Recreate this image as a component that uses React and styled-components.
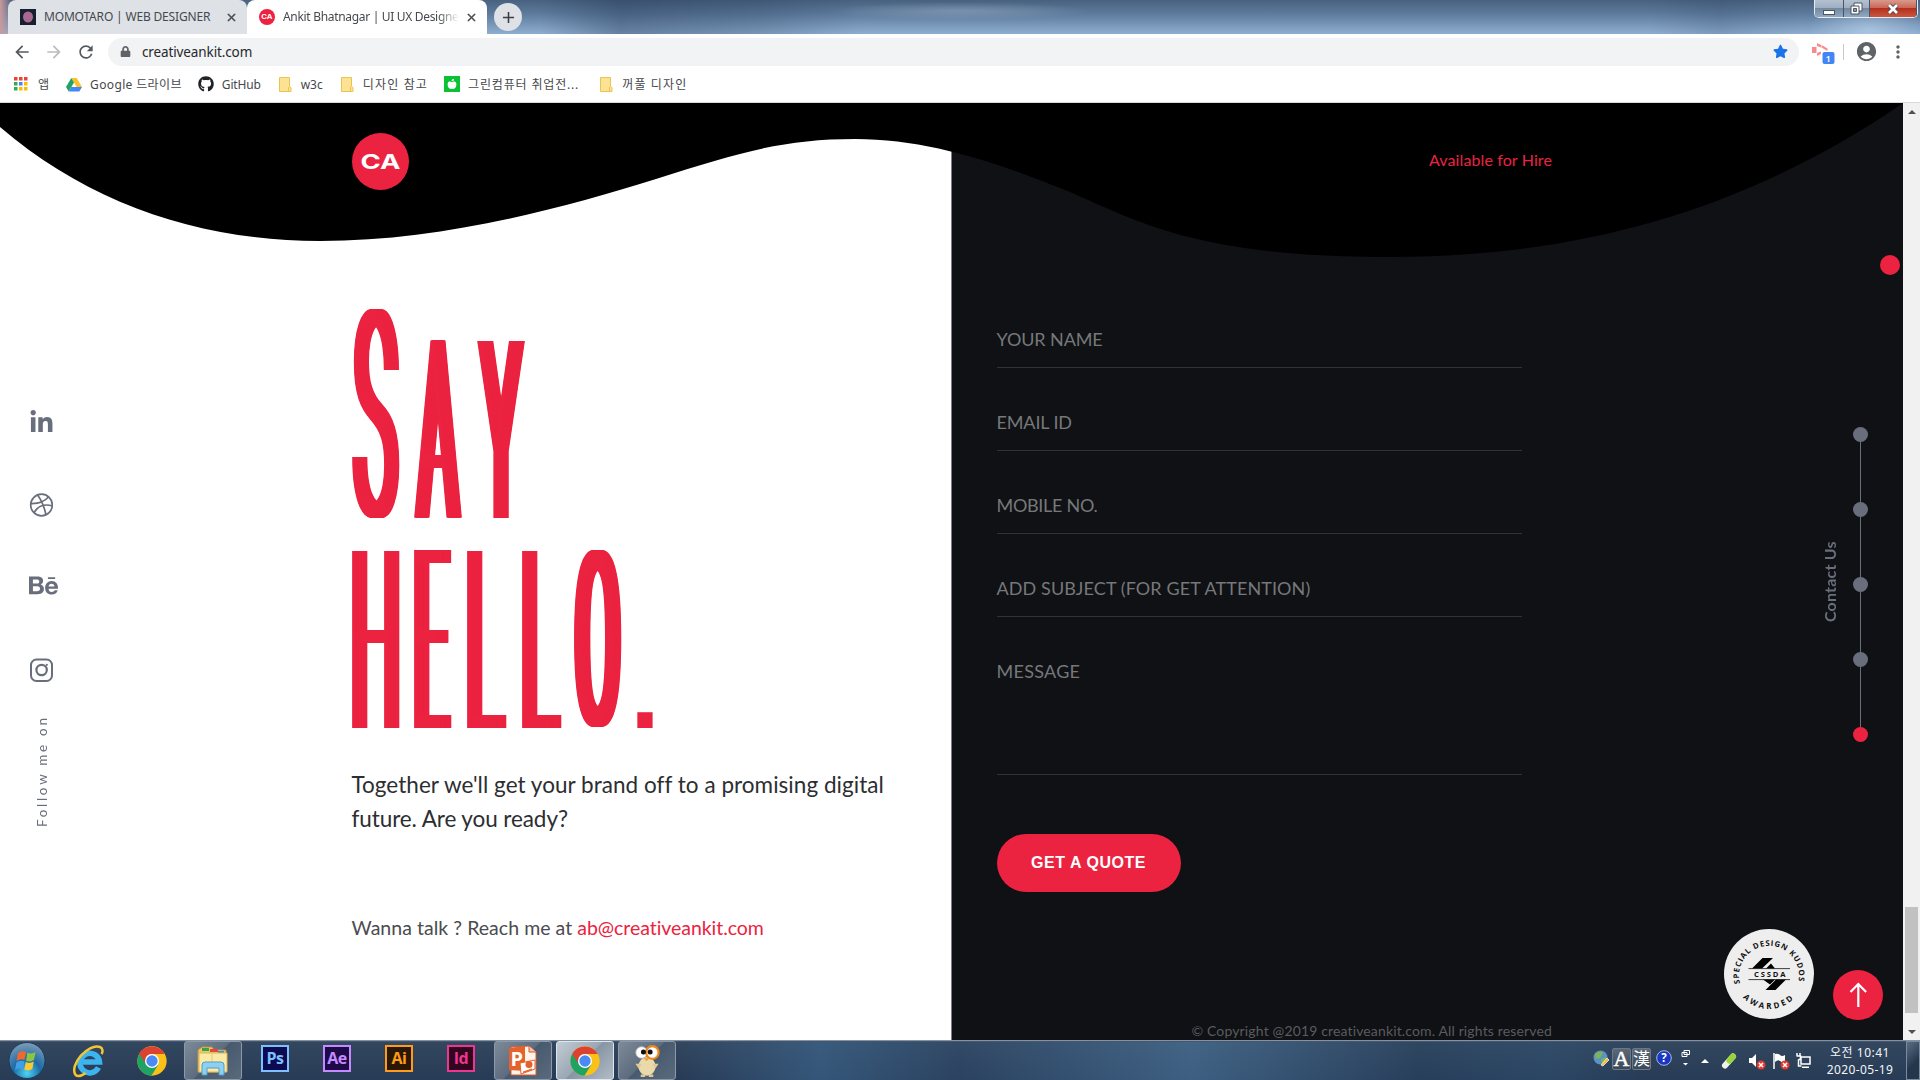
import React, { useLayoutEffect, useMemo, useRef, useState } from "react";
import styled, { createGlobalStyle, css } from "styled-components";
import { FaLinkedinIn, FaBehance, FaGithub, FaStar, FaLock, FaAppleAlt } from "react-icons/fa";
import { MdArrowBack, MdArrowForward, MdRefresh, MdAccountCircle, MdMoreVert, MdClose, MdAdd } from "react-icons/md";

const RED = "#eb2340";
const DARK = "#0f1114";
const SLATE = "#686e7c";

const Global = createGlobalStyle`
  * { box-sizing: border-box; }
  body { margin: 0; overflow: hidden; background: #fff; }
  h1, p { margin: 0; font-weight: inherit; }
`;

/* ---------- text fitted to a measured width ---------- */

const FitSpan = styled.span`
  display: inline-block;
  white-space: pre;
`;

function Fit({ width, children }) {
  const ref = useRef(null);
  const [spacing, setSpacing] = useState(0);
  useLayoutEffect(() => {
    const natural = ref.current.offsetWidth;
    setSpacing((width - natural) / children.length);
  }, [width, children]);
  return <FitSpan ref={ref} style={{ letterSpacing: `${spacing}px` }}>{children}</FitSpan>;
}

/* ---------- shell ---------- */

const Screen = styled.div`
  width: 1920px;
  height: 1080px;
  display: flex;
  flex-direction: column;
  overflow: hidden;
  font-family: "Noto Sans", "Noto Sans CJK KR", sans-serif;
`;

const TabStrip = styled.div`
  height: 34px;
  flex: none;
  display: flex;
  padding-left: 8px;
  background:
    radial-gradient(ellipse 60px 26px at 1868px 30px, rgba(190, 215, 240, 0.6), transparent),
    radial-gradient(ellipse 130px 9px at 960px 11px, rgba(190, 205, 220, 0.32), transparent),
    linear-gradient(90deg, #c99a9c 0, rgba(200, 154, 156, 0) 12px),
    linear-gradient(90deg, transparent 540px, rgba(30, 50, 80, 0.35) 620px, rgba(30, 50, 80, 0.2) 760px, transparent 860px, transparent 1650px, rgba(30, 50, 80, 0.15) 1720px, transparent 1800px),
    linear-gradient(#48617f 0, #5d7a9c 40%, #8eaed0 100%);
`;

const Tab = styled.div`
  width: ${(p) => p.$w}px;
  height: 34px;
  display: flex;
  align-items: center;
  padding: 0 9px 0 ${(p) => p.$pad}px;
  border-radius: 8px 8px 0 0;
  background: ${(p) => (p.$active ? "#fff" : "#dee1e6")};
  color: #45494d;
  font-size: 12px;
  svg { flex: none; }
  svg:last-child path:last-child { stroke: currentColor; stroke-width: 1; }
`;

const TabTitle = styled.div`
  flex: 1;
  min-width: 0;
  overflow: hidden;
  margin: 0 6px 0 8px;
  padding-bottom: 1px;
  white-space: nowrap;
  ${(p) => p.$fade && css`mask-image: linear-gradient(90deg, #000 88%, transparent);`}
`;

const NewTab = styled.div`
  width: 28px;
  height: 28px;
  margin: 3px 0 0 7px;
  border-radius: 50%;
  background: #dee1e6;
  color: #3c4043;
  display: flex;
  align-items: center;
  justify-content: center;
`;

const WindowButtons = styled.div`
  display: flex;
  width: 104px;
  height: 18px;
  margin: 0 2px 0 auto;
  border: 1px solid #e4ebf3;
  border-top: 0;
  border-radius: 0 0 5px 5px;
  box-shadow: inset 0 0 0 1px #3c4a5c;
  overflow: hidden;
`;

const WindowButton = styled.div`
  flex: ${(p) => p.$w} 0 0;
  display: flex;
  align-items: center;
  justify-content: center;
  border-right: 1px solid #46566a;
  background: ${(p) => (p.$close
    ? "linear-gradient(#d99a8d 0, #c9695a 45%, #b5301c 50%, #c9583f 100%)"
    : "linear-gradient(#b4c1d0 0, #9fafc2 45%, #7488a0 50%, #93a9c2 100%)")};
`;

const Toolbar = styled.div`
  height: 35px;
  flex: none;
  display: flex;
  align-items: center;
  background: #fff;
  color: #5f6368;
  padding-left: 12px;
`;

const NavIcon = styled.div`
  width: 20px;
  height: 20px;
  margin-right: 12px;
  font-size: 20px;
  line-height: 0;
  color: ${(p) => (p.$dim ? "#babcbe" : "#55595e")};
`;

const Omnibox = styled.div`
  width: 1691px;
  height: 28px;
  border-radius: 14px;
  background: #f1f3f4;
  display: flex;
  align-items: center;
  padding: 0 11px 0 12px;
  font-size: 13.5px;
  color: #26282b;
`;

const Url = styled.div`
  flex: 1;
  margin-left: 11px;
`;

const Extension = styled.div`
  width: 24px;
  height: 26px;
  margin: 4px 0 0 13px;
`;

const Separator = styled.div`
  width: 1px;
  height: 16px;
  background: #c6c8cb;
  margin: 0 11px 0 7px;
`;

const MenuDots = styled.div`
  margin-left: 10px;
  line-height: 0;
`;

const Bookmarks = styled.div`
  height: 34px;
  flex: none;
  display: flex;
  align-items: center;
  padding: 0 0 3px 14px;
  border-bottom: 1px solid #d8d9db;
  background: #fff;
  font-size: 12px;
  color: #45484c;
`;

const Bookmark = styled.div`
  display: flex;
  align-items: center;
  gap: ${(p) => p.$gap || 8}px;
  margin-right: ${(p) => p.$after || 18}px;
  svg { flex: none; }
`;

/* ---------- page ---------- */

const Viewport = styled.div`
  height: 937px;
  flex: none;
  display: flex;
`;

const Page = styled.main`
  position: relative;
  width: 1903px;
  display: grid;
  grid-template-columns: 952px 951px;
  overflow: hidden;
  font-family: Lato, "Open Sans", sans-serif;
`;

const Intro = styled.section`
  background: #fff;
  border-right: 1px solid #7b8088;
  padding: 206px 0 0 351.5px;
  color: #2c2e32;
`;

const Headline = styled.h1`
  display: flex;
  flex-direction: column;
  gap: 32px;
  height: 419px;
  color: ${RED};
  line-height: 250px;
`;

const HeadlineRow = styled.span`
  display: flex;
  align-items: flex-end;
`;

const Cell = styled.span`
  display: block;
  flex: none;
  width: ${(p) => p.$w}px;
  height: ${(p) => p.$h}px;
  margin-right: ${(p) => p.$after || 0}px;
`;

const Letter = styled.span`
  display: block;
  width: max-content;
  transform-origin: 0 0;
  font: ${(p) => p.$font};
  line-height: 250px;
`;

const FACES = {
  straight: { font: "300 250px Roboto, sans-serif", stem: 17 },
  round: { font: '400 250px "DejaVu Sans Mono", monospace', stem: 24 },
  dot: { font: '700 250px "Liberation Sans", sans-serif', stem: 0 },
};

function Glyph({ ch, w, h, after, face = "straight" }) {
  const { font, stem } = FACES[face];
  const style = useMemo(() => {
    const ctx = document.createElement("canvas").getContext("2d");
    ctx.font = font;
    const m = ctx.measureText(ch);
    const inkW = m.actualBoundingBoxRight + m.actualBoundingBoxLeft;
    const inkH = m.actualBoundingBoxAscent + m.actualBoundingBoxDescent;
    const sx = stem ? (w - 15.7) / (inkW - stem) : w / inkW;
    const sy = h / inkH;
    const grow = stem ? Math.max(0, 15.7 / sx - stem) : 0;
    const baseline = (250 - m.fontBoundingBoxAscent - m.fontBoundingBoxDescent) / 2 + m.fontBoundingBoxAscent;
    const steps = Math.ceil(grow / 2);
    const shadows = [];
    for (let i = 1; i <= steps; i += 1) shadows.push(`${((grow * i) / steps).toFixed(2)}px 0 0 ${RED}`);
    return {
      transform: `translate(${m.actualBoundingBoxLeft * sx}px, ${-(baseline - m.actualBoundingBoxAscent) * sy}px) scale(${sx}, ${sy})`,
      textShadow: shadows.join(", ") || "none",
    };
  }, [ch, w, h, font, stem]);
  return <Cell $w={w} $h={h} $after={after}><Letter $font={font} style={style}>{ch}</Letter></Cell>;
}

const Lead = styled.p`
  margin-top: 40px;
  font-size: 22.5px;
  line-height: 34px;
`;

const Contact = styled.p`
  margin-top: 78px;
  font-size: 19.5px;
  line-height: 28px;
  color: #4a4c50;
`;

const Mail = styled.span`
  color: ${RED};
`;

const Quote = styled.section`
  background: ${DARK};
  padding: 214px 0 0 44.5px;
  display: flex;
  flex-direction: column;
  align-items: flex-start;
`;

const Field = styled.div`
  width: 525px;
  height: ${(p) => p.$h}px;
  padding-top: ${(p) => p.$pt}px;
  border-bottom: 1px solid #303236;
  color: #76787a;
  font-size: 18px;
  line-height: 28px;
`;

const Submit = styled.div`
  width: 184px;
  height: 58px;
  margin-top: 59px;
  border-radius: 29px;
  background: ${RED};
  color: #fff;
  font: bold 16px/58px "Liberation Sans", sans-serif;
  text-align: center;
`;

const Copyright = styled.div`
  margin: 122px 0 0 195px;
  width: 362px;
  font-size: 14px;
  line-height: 34px;
  white-space: nowrap;
  color: #5a5c60;
`;

const Wave = styled.svg`
  position: absolute;
  inset: 0 auto auto 0;
`;

const Header = styled.header`
  position: absolute;
  top: 30px;
  left: 352px;
  width: 1200px;
  display: flex;
  justify-content: space-between;
  align-items: center;
  color: ${RED};
  font-size: 16px;
`;

const Hire = styled.div`
  padding-bottom: 4px;
`;

const Logo = styled.div`
  width: 57px;
  height: 57px;
  line-height: 0;
`;

const Social = styled.nav`
  position: absolute;
  top: 307px;
  left: 29px;
  display: flex;
  flex-direction: column;
  color: ${SLATE};
`;

const SocialLink = styled.div`
  height: ${(p) => p.$h || 83}px;
  line-height: 0;
`;

const Vertical = styled.div`
  writing-mode: vertical-rl;
  transform: rotate(180deg);
  white-space: nowrap;
  font-size: ${(p) => p.$size}px;
  font-weight: ${(p) => p.$weight || 400};
  line-height: 20px;
  width: 20px;
  height: ${(p) => p.$h}px;
  margin-bottom: ${(p) => p.$lift || 0}px;
  letter-spacing: ${(p) => p.$ls}px;
  color: ${SLATE};
`;

const Follow = styled.div`
  margin: -28px 0 0 3px;
`;

const Progress = styled.aside`
  position: absolute;
  top: 324px;
  left: 1820px;
  display: flex;
  align-items: center;
  gap: 13px;
  height: 315px;
`;

const Track = styled.div`
  width: 15px;
  height: 315px;
  display: flex;
  flex-direction: column;
  align-items: center;
  justify-content: space-between;
  background: linear-gradient(${SLATE}, ${SLATE}) center / 1px 300px no-repeat;
`;

const Dot = styled.div`
  width: 15px;
  height: 15px;
  border-radius: 50%;
  background: ${(p) => (p.$on ? RED : SLATE)};
`;

const Cursor = styled.div`
  position: absolute;
  top: 152px;
  left: 1880px;
  width: 20px;
  height: 20px;
  border-radius: 50%;
  background: ${RED};
`;

const Corner = styled.div`
  position: absolute;
  top: 826px;
  left: 1724px;
  display: flex;
  align-items: flex-end;
  gap: 19px;
`;

const ToTop = styled.div`
  width: 50px;
  height: 50px;
  margin-bottom: -1px;
  border-radius: 50%;
  background: ${RED};
  line-height: 0;
`;

const Scrollbar = styled.div`
  width: 17px;
  background: #f1f1f1;
  display: flex;
  flex-direction: column;
  align-items: center;
  padding: 7px 0 6px;
`;

const Thumb = styled.div`
  width: 13px;
  height: 106px;
  margin: 793px 0 auto;
  background: #c1c1c1;
`;

const Arrow = styled.div`
  border: 4px solid transparent;
  ${(p) => (p.$up ? "border-top: 0; border-bottom-color" : "border-bottom: 0; border-top-color")}: ${(p) => p.$c || "#505050"};
`;

/* ---------- taskbar ---------- */

const Taskbar = styled.footer`
  height: 40px;
  flex: none;
  display: flex;
  align-items: center;
  border-top: 1px solid #8492a5;
  box-shadow: inset 0 1px 0 #45566d;
  background:
    linear-gradient(90deg, transparent 680px, rgba(64, 108, 150, 0.55) 820px, rgba(50, 80, 115, 0.35) 960px, rgba(84, 130, 172, 0.5) 1190px, rgba(40, 70, 100, 0.3) 1420px, rgba(50, 90, 125, 0.35) 1550px, transparent 1640px),
    linear-gradient(#33475f, #273b56);
`;

const TaskButton = styled.div`
  width: ${(p) => p.$w || 58}px;
  height: 39px;
  margin-right: 4px;
  display: flex;
  align-items: center;
  justify-content: center;
  border-radius: 3px;
  ${(p) => p.$open && css`
    border: 1px solid ${p.$open === 2 ? "#dfe6ec" : "#8c99a8"};
    background: ${p.$open === 2
      ? "linear-gradient(135deg, #c3ccd5 0, #9aa7b4 48%, #8795a4 50%, #b2bcc6 100%)"
      : "linear-gradient(135deg, #7d8a99 0, #5d6c7e 48%, #485a6e 50%, #5a6a7d 100%)"};
  `}
`;

const AdobeTile = styled.div`
  width: 28px;
  height: 27px;
  margin-bottom: 4px;
  border: 2px solid ${(p) => p.$c};
  background: ${(p) => p.$bg};
  color: ${(p) => p.$c};
  font: 700 16px/22px "Open Sans", sans-serif;
  text-align: center;
  letter-spacing: -0.5px;
`;

const Tray = styled.div`
  margin-left: auto;
  display: flex;
  align-items: center;
  height: 39px;
`;

const Ime = styled.div`
  width: 19px;
  height: 22px;
  margin: -3px 1px 0 0;
  border: 1px solid #6d7885;
  border-radius: 2px;
  background: linear-gradient(#5a6878, #3a4959);
  color: #fff;
  font: ${(p) => (p.$latin ? '22px/20px "Liberation Serif", serif' : '17px/18px "Noto Sans CJK KR", sans-serif')};
  -webkit-text-stroke: ${(p) => (p.$latin ? 0.5 : 0)}px #fff;
  display: flex;
  justify-content: center;
`;

const TrayIcon = styled.div`
  width: ${(p) => p.$w || 24}px;
  display: flex;
  justify-content: center;
  margin-top: ${(p) => p.$t || 0}px;
`;

const Clock = styled.div`
  width: 92px;
  text-align: center;
  color: #f2f5f8;
  font-size: 12px;
  line-height: 17px;
`;

const ShowDesktop = styled.div`
  width: 14px;
  height: 39px;
  border: 1px solid #7c8b9c;
  background: linear-gradient(135deg, #5c6e82, #24364c 60%);
`;

/* ---------- drawings ---------- */

const Chrome = ({ size = 32 }) => (
  <svg width={size} height={size} viewBox="0 0 48 48">
    <circle cx="24" cy="24" r="22" fill="#fbc116" />
    <path d="M24 24L4.900 13A22 22 0 0 0 23 46L33.500 29.500Z" fill="#1ea362" />
    <path d="M4.900 13A22 22 0 0 1 43.100 13.500H24A10.500 10.500 0 0 0 14.500 28.500Z" fill="#dd4132" />
    <circle cx="24" cy="24" r="10.500" fill="#fff" />
    <circle cx="24" cy="24" r="8.500" fill="#4a8af4" />
  </svg>
);

const Folder = () => (
  <svg width="13" height="15" viewBox="0 0 13 15">
    <path d="M.5.5h10v9l1.500 1v4H.5z" fill="#fde293" stroke="#e8c451" />
    <path d="M9.500 10v4.500" stroke="#e8c451" />
  </svg>
);

const Apps = () => (
  <svg width="14" height="14" viewBox="0 0 14 14">
    {["#ea4335", "#ea4335", "#ea4335", "#34a853", "#4285f4", "#fbbc05", "#34a853", "#fbbc05", "#fbbc05"].map((c, i) => (
      <rect key={i} x={(i % 3) * 5} y={Math.floor(i / 3) * 5} width="3.500" height="3.500" fill={c} />
    ))}
  </svg>
);

const Drive = () => (
  <svg width="16" height="15" viewBox="0 0 16 15">
    <path d="M5.300 1h5.400L16 10h-5.400z" fill="#fbc02d" />
    <path d="M5.300 1L0 10l2.700 4.500L8 5.600z" fill="#1fa463" />
    <path d="M5.300 10H16l-2.700 4.500H2.700z" fill="#4587f4" />
  </svg>
);

const LogoText = ({ size }) => (
  <svg width={size} height={size} viewBox="0 0 57 57">
    <circle cx="28.500" cy="28.500" r="28.500" fill={RED} />
    <text x="8.500" y="35.500" textLength="40" lengthAdjust="spacingAndGlyphs" fill="#fff" fontFamily="Inter, sans-serif" fontWeight="700" fontSize="20.500">CA</text>
  </svg>
);

const Dribbble = () => (
  <svg width="24" height="24" viewBox="0 0 24 24" fill="none" stroke="currentColor" strokeWidth="1.700">
    <circle cx="12.500" cy="12" r="10.800" />
    <path d="M8.500 2c3.500 4.500 6.500 10.500 8.500 20M1.800 10.500c7.500.3 13-1.200 17.700-6.500M5 19.800c3.500-6.300 9.500-9.300 18.200-7" />
  </svg>
);

const Instagram = () => (
  <svg width="24" height="24" viewBox="0 0 24 24" fill="none" stroke="currentColor" strokeWidth="2">
    <rect x="2" y="1.500" width="21" height="21.500" rx="5.500" />
    <circle cx="12.600" cy="12" r="5.200" strokeWidth="2.200" />
    <circle cx="17.800" cy="6.800" r="1.100" fill="currentColor" stroke="none" />
  </svg>
);

const Award = () => (
  <svg width="90" height="90" viewBox="0 0 90 90" fontFamily="Open Sans, sans-serif" fontWeight="700">
    <defs>
      <path id="arcTop" d="M16 54.500A30 30 0 1 1 74 54.500" />
      <path id="arcBottom" d="M14 61.500A35.300 35.300 0 0 0 76 61.500" />
    </defs>
    <circle cx="45" cy="45" r="45" fill="#eee" />
    <text fontSize="7.800" fill="#111"><textPath href="#arcTop" textLength="107">SPECIAL DESIGN KUDOS</textPath></text>
    <text fontSize="8" fill="#111"><textPath href="#arcBottom" startOffset="8.500" textLength="56">AWARDED</textPath></text>
    <path d="M28 39.500L38.500 29H49L38 39.500zM42 39.500l5-5 4 5zM39 50.500h12l-5 5zM41.500 61L52 50.500h10L51.500 61z" fill="#000" />
    <path d="M24.500 39.600h41.500M24.500 50.600h41.500" stroke="#111" strokeWidth=".8" />
    <text x="30" y="47.900" fontSize="7.600" textLength="31.500" fill="#111">CSSDA</text>
  </svg>
);

const Orb = () => (
  <svg width="40" height="40" viewBox="0 0 40 40">
    <defs>
      <radialGradient id="orb" cx=".5" cy=".85" r=".85">
        <stop offset="0" stopColor="#4fd4f5" /><stop offset=".45" stopColor="#1d6aa5" /><stop offset="1" stopColor="#7f9db8" />
      </radialGradient>
    </defs>
    <circle cx="20" cy="19.500" r="18" fill="url(#orb)" stroke="#1b3a5a" />
    <path d="M11 12q4-3 8-1l-1.500 8q-4-2-8 1z" fill="#f0682c" />
    <path d="M20.500 11.500q4 2 8-.5l-1.500 8q-4 2.500-8 .5z" fill="#8cc63e" />
    <path d="M9.300 21.500q4-3 8-1L16 28q-4-2-8 1z" fill="#3fa0e8" />
    <path d="M18.800 21q4 2 8-.5L25.300 28q-4 2.500-8 .5z" fill="#fdc92e" />
  </svg>
);

const Explorer = () => (
  <svg width="34" height="32" viewBox="0 0 34 32">
    <path d="M2 5l4-3h10l2 3h12v22H2z" fill="#e9c869" stroke="#b8923a" />
    <path d="M6 3h7v3H6z" fill="#35a34a" /><path d="M14 4h8v3h-8z" fill="#e04a38" /><path d="M22 6h6v3h-6z" fill="#3f8ee0" />
    <path d="M3 8h28v19H3z" fill="#fbe9a6" stroke="#d9b65a" />
    <path d="M16 8v12" stroke="#e6cb78" />
    <path d="M6 30V20q0-3 3-3h16q3 0 3 3v10h-5v-7H11v7z" fill="#8fd0f0" stroke="#4a9fd0" />
  </svg>
);

const IE = () => (
  <svg width="33" height="34" viewBox="0 0 33 34" fill="none">
    <path d="M26.500 23.500A9.800 9.800 0 1 1 27.500 18H11" stroke="#3db4ee" strokeWidth="5.500" />
    <path d="M3.500 31C-3 21 16-1 28 3c3 1 3 5 1.500 7M3.500 31c3 2.500 8-.5 10-2" stroke="#f4c530" strokeWidth="2.500" />
  </svg>
);

const PowerPoint = () => (
  <svg width="32" height="34" viewBox="0 0 32 34">
    <path d="M4 3L22 2l7 6v23H4z" fill="#fff3ec" stroke="#d35b2b" />
    <path d="M22 2v6h7" fill="#f6c4ad" stroke="#d35b2b" />
    <path d="M2 4l16-2v25L2 26z" fill="#e4622c" />
    <text x="3.500" y="22" fontFamily="Open Sans, sans-serif" fontWeight="700" fontSize="20" fill="#fff">P</text>
    <path d="M13 19l15-3v9l-14 5z" fill="#fff" stroke="#e4622c" />
    <circle cx="22" cy="20.500" r="3.500" fill="#e4622c" /><path d="M16 27.500l9-3v1.500l-9 3z" fill="#e4622c" />
  </svg>
);

const Bird = () => (
  <svg width="32" height="34" viewBox="0 0 32 38">
    <ellipse cx="16" cy="25" rx="9.500" ry="10.500" fill="#ead9ab" />
    <path d="M3 22l7 0-3 6zM29 22l-7 0 3 6z" fill="#dfca94" />
    <path d="M9 35.500h5M18 35.500h5" stroke="#dfca94" strokeWidth="3" />
    <circle cx="10" cy="9.500" r="6.500" fill="#fff" stroke="#bbb" />
    <circle cx="22" cy="9.500" r="7" fill="#fff" stroke="#ee8a1d" strokeWidth="2.500" />
    <circle cx="12" cy="9" r="2.800" fill="#111" /><circle cx="19.500" cy="9" r="2.800" fill="#111" />
    <path d="M12 16h7l-3.500 3z" fill="#f29b26" />
  </svg>
);

const RedCross = () => (
  <g><circle cx="14" cy="13" r="4.500" fill="#e23b2e" /><path d="M12 11l4 4M16 11l-4 4" stroke="#fff" strokeWidth="1.500" /></g>
);

const FIELDS = [["YOUR NAME", 106], ["EMAIL ID", 75], ["MOBILE NO.", 101], ["ADD SUBJECT (FOR GET ATTENTION)", 314]];

export default function App() {
  return (
    <Screen>
      <Global />
      <TabStrip>
        <Tab $w={239} $pad={12}>
          <svg width="16" height="16" viewBox="0 0 16 16"><rect width="16" height="16" fill="#16202e" /><ellipse cx="8" cy="8" rx="5" ry="5.500" fill="#a9688f" /></svg>
          <TabTitle><Fit width={166}>MOMOTARO | WEB DESIGNER</Fit></TabTitle>
          <MdClose size={13} />
        </Tab>
        <Tab $w={240} $pad={12} $active>
          <LogoText size={16} />
          <TabTitle $fade><Fit width={180}>Ankit Bhatnagar | UI UX Designer</Fit></TabTitle>
          <MdClose size={13} />
        </Tab>
        <NewTab><MdAdd size={19} /></NewTab>
        <WindowButtons>
          <WindowButton $w={28}><svg width="12" height="14"><rect x=".5" y="8.500" width="11" height="4" fill="#fff" stroke="#4b5563" /></svg></WindowButton>
          <WindowButton $w={26}><svg width="13" height="13"><path d="M4 1h8v8H4z" fill="#fff" stroke="#4b5563" /><path d="M1 4h8v8H1z" fill="#fff" stroke="#4b5563" /><path d="M3.500 6.500h3v3h-3z" fill="#8a9bb0" stroke="#4b5563" /></svg></WindowButton>
          <WindowButton $w={46} $close><svg width="14" height="12"><path d="M3 2l8 8M11 2l-8 8" stroke="#4b4048" strokeWidth="4.500" /><path d="M3 2l8 8M11 2l-8 8" stroke="#fff" strokeWidth="2.800" /></svg></WindowButton>
        </WindowButtons>
      </TabStrip>
      <Toolbar>
        <NavIcon><MdArrowBack /></NavIcon>
        <NavIcon $dim><MdArrowForward /></NavIcon>
        <NavIcon><MdRefresh /></NavIcon>
        <Omnibox>
          <FaLock size={11} color="#5f6368" />
          <Url><Fit width={110}>creativeankit.com</Fit></Url>
          <FaStar size={15} color="#1a73e8" />
        </Omnibox>
        <Extension>
          <svg width="24" height="24" viewBox="0 0 24 24">
            <path d="M0 6h4.500v6H0zM5 2l4 2v2.500L5 5zM9.500 4l6 3.500V10l-6-3.500zM5 12l4-1.500V13l-4 2z" fill="#f78b8b" />
            <rect x="10.500" y="11" width="12" height="12" rx="2" fill="#4285f4" />
            <text x="13.500" y="20.500" fontSize="9.500" fontWeight="600" fill="#fff" fontFamily="Open Sans, sans-serif">1</text>
          </svg>
        </Extension>
        <Separator />
        <MdAccountCircle size={23} />
        <MenuDots><MdMoreVert size={20} /></MenuDots>
      </Toolbar>
      <Bookmarks>
        <Bookmark $gap={10} $after={17}><Apps /><Fit width={11}>앱</Fit></Bookmark>
        <Bookmark $after={16}><Drive /><Fit width={92}>Google 드라이브</Fit></Bookmark>
        <Bookmark><FaGithub size={16} color="#1f2328" /><Fit width={39}>GitHub</Fit></Bookmark>
        <Bookmark $gap={9}><Folder /><Fit width={22}>w3c</Fit></Bookmark>
        <Bookmark $gap={9} $after={16}><Folder /><Fit width={65}>디자인 참고</Fit></Bookmark>
        <Bookmark $after={21}>
          <svg width="16" height="16" viewBox="0 0 16 16"><rect width="16" height="16" fill="#0bc235" /><g transform="translate(3 3)"><FaAppleAlt size={10} color="#fff" /></g></svg>
          <Fit width={111}>그린컴퓨터 취업전...</Fit>
        </Bookmark>
        <Bookmark $gap={9}><Folder /><Fit width={65}>꺼풀 디자인</Fit></Bookmark>
      </Bookmarks>

      <Viewport>
        <Page>
          <Intro>
            <Headline>
              <HeadlineRow>
                <Glyph ch="S" w={47.500} h={209} after={15} />
                <Glyph ch="A" w={48} h={178} after={15} />
                <Glyph ch="Y" w={48} h={178} />
              </HeadlineRow>
              <HeadlineRow>
                <Glyph ch="H" w={47.500} h={178} after={15} />
                <Glyph ch="E" w={37.500} h={178} after={15} />
                <Glyph ch="L" w={39.500} h={178} after={15.500} />
                <Glyph ch="L" w={39.500} h={178} after={13} />
                <Glyph ch="O" w={47.500} h={178} after={15.500} face="round" />
                <Glyph ch="." w={16} h={16} face="dot" />
              </HeadlineRow>
            </Headline>
            <Lead>
              <Fit width={532}>Together we'll get your brand off to a promising digital</Fit>
              <br />
              <Fit width={216}>future. Are you ready?</Fit>
            </Lead>
            <Contact><Fit width={226}>Wanna talk ? Reach me at </Fit><Mail><Fit width={187}>ab@creativeankit.com</Fit></Mail></Contact>
          </Intro>
          <Quote>
            {FIELDS.map(([label, width], i) => (
              <Field key={label} $h={i === 0 ? 51 : 83} $pt={i === 0 ? 8 : 40}><Fit width={width}>{label}</Fit></Field>
            ))}
            <Field $h={158} $pt={40}><Fit width={84}>MESSAGE</Fit></Field>
            <Submit><Fit width={115}>GET A QUOTE</Fit></Submit>
            <Copyright><Fit width={361}>© Copyright @2019 creativeankit.com. All rights reserved</Fit></Copyright>
          </Quote>

          <Wave width="1903" height="160" viewBox="0 103 1903 160">
            <path d="M0 103V127C90 204 200 241 320 241C440 241 560 209 656 179C740 152 785 139 855 139C930 139 1000 164 1065 190C1135 219 1190 257 1390 257C1570 257 1740 215 1903 103Z" fill="#000" />
          </Wave>
          <Header>
            <Logo><LogoText size={57} /></Logo>
            <Hire><Fit width={123}>Available for Hire</Fit></Hire>
          </Header>
          <Social>
            <SocialLink><FaLinkedinIn size={25} /></SocialLink>
            <SocialLink $h={78}><Dribbble /></SocialLink>
            <SocialLink $h={87}><FaBehance size={29} /></SocialLink>
            <SocialLink><Instagram /></SocialLink>
            <Follow><Vertical $size={13.500} $h={114} $ls={2.700}>Follow me on</Vertical></Follow>
          </Social>
          <Progress>
            <Vertical $size={16} $weight={700} $h={84} $ls={0.200} $lift={10}>Contact Us</Vertical>
            <Track><Dot /><Dot /><Dot /><Dot /><Dot $on /></Track>
          </Progress>
          <Cursor />
          <Corner>
            <Award />
            <ToTop><svg width="50" height="50" viewBox="0 0 50 50" fill="none" stroke="#fff" strokeWidth="2.200"><path d="M25.300 37V14M17.500 22l7.800-8 7.800 8" /></svg></ToTop>
          </Corner>
        </Page>
        <Scrollbar>
          <Arrow $up />
          <Thumb />
          <Arrow />
        </Scrollbar>
      </Viewport>

      <Taskbar>
        <TaskButton $w={54}><Orb /></TaskButton>
        <TaskButton $w={61}><IE /></TaskButton>
        <TaskButton $w={57}><Chrome /></TaskButton>
        <TaskButton $open={1}><Explorer /></TaskButton>
        <TaskButton><AdobeTile $c="#7cc0ff" $bg="#0c0a50">Ps</AdobeTile></TaskButton>
        <TaskButton><AdobeTile $c="#c48bff" $bg="#1e0a48">Ae</AdobeTile></TaskButton>
        <TaskButton><AdobeTile $c="#ff9a1a" $bg="#2a1804">Ai</AdobeTile></TaskButton>
        <TaskButton><AdobeTile $c="#ee3592" $bg="#33061f">Id</AdobeTile></TaskButton>
        <TaskButton $open={1}><PowerPoint /></TaskButton>
        <TaskButton $open={2}><Chrome /></TaskButton>
        <TaskButton $open={1}><Bird /></TaskButton>
        <Tray>
          <TrayIcon $w={22} $t={-5}>
            <svg width="17" height="17" viewBox="0 0 17 17"><circle cx="7.500" cy="7.500" r="7" fill="#5c93c4" /><path d="M2 4q5-4 8-1l-3 5-4 1zM8 9l5-2v4l-4 3z" fill="#7fb35a" /><path d="M8 15l6-7 2 2-6 6z" fill="#f4b942" stroke="#fff" strokeWidth=".7" /></svg>
          </TrayIcon>
          <Ime $latin>A</Ime>
          <Ime>漢</Ime>
          <TrayIcon $t={-5}>
            <svg width="16" height="16"><circle cx="8" cy="8" r="7.300" fill="#1a36c4" stroke="#a9b8e8" /><text x="5.200" y="12.300" fontSize="11.500" fontWeight="700" fill="#fff" fontFamily="Open Sans, sans-serif">?</text></svg>
          </TrayIcon>
          <TrayIcon $w={20} $t={-6}>
            <svg width="10" height="18" fill="none" stroke="#fff"><path d="M3 1.500h5.500v4H3zM1 3.500h5v4H1z" /><path d="M2 14h5l-2.500 2.500z" fill="#fff" stroke="none" /></svg>
          </TrayIcon>
          <TrayIcon $w={18}><Arrow $up $c="#fff" /></TrayIcon>
          <TrayIcon $w={30}>
            <svg width="18" height="18"><path d="M5 13.500L13 4.500" stroke="#eef2ea" strokeWidth="6" strokeLinecap="round" /><path d="M9.500 8.500L13 4.500" stroke="#98d43a" strokeWidth="6" strokeLinecap="round" /></svg>
          </TrayIcon>
          <TrayIcon $w={24}><svg width="19" height="18"><path d="M2 6h3l4-4v13l-4-4H2z" fill="#fff" /><RedCross /></svg></TrayIcon>
          <TrayIcon $w={24}><svg width="19" height="18"><path d="M3 1v16" stroke="#fff" strokeWidth="1.500" /><path d="M4 2q3-1 5 1t5 0v7q-3 1-5-1T4 10z" fill="#fff" /><RedCross /></svg></TrayIcon>
          <TrayIcon $w={22}><svg width="17" height="17" fill="none" stroke="#fff" strokeWidth="1.500"><path d="M6 5h9v7H6zM7 15.200h7M2 1v3M5 1v3M1.500 4h4v3l-2 1v6h3" /></svg></TrayIcon>
          <Clock><Fit width={60}>오전 10:41</Fit><br /><Fit width={67}>2020-05-19</Fit></Clock>
          <ShowDesktop />
        </Tray>
      </Taskbar>
    </Screen>
  );
}
